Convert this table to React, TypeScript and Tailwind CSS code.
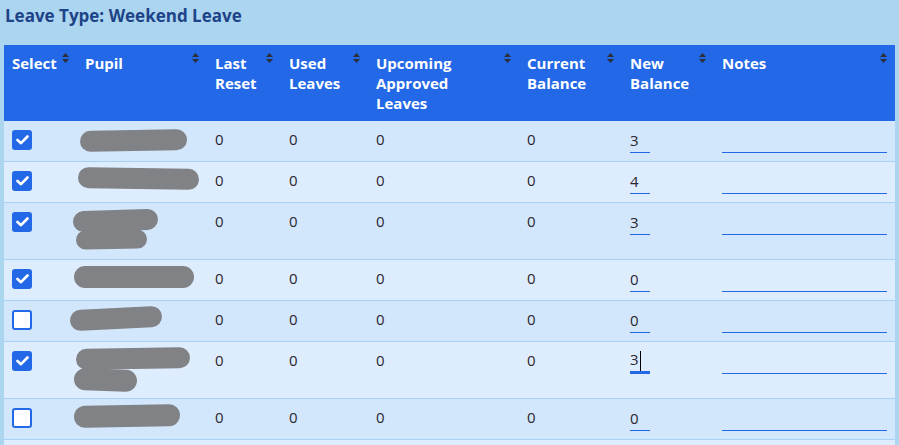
import React from "react";

interface Blob {
  x: number;
  y: number;
  w: number;
  h: number;
  r?: number;
}

interface Row {
  checked: boolean;
  blobs: Blob[];
  tall?: boolean;
  balance: string;
  focused?: boolean;
}

const rows: Row[] = [
  { checked: true, balance: "3", blobs: [{ x: 3, y: 1, w: 107, h: 21, r: -1 }] },
  { checked: true, balance: "4", blobs: [{ x: 1, y: -2, w: 121, h: 21, r: 1 }] },
  {
    checked: true,
    balance: "3",
    tall: true,
    blobs: [
      { x: -4, y: -1, w: 85, h: 21, r: -2 },
      { x: -1, y: 19, w: 71, h: 19, r: -1 },
    ],
  },
  { checked: true, balance: "0", blobs: [{ x: -3, y: -2, w: 120, h: 22, r: 0 }] },
  { checked: false, balance: "0", blobs: [{ x: -7, y: -1, w: 92, h: 21, r: -3 }] },
  {
    checked: true,
    balance: "3",
    tall: true,
    focused: true,
    blobs: [
      { x: -1, y: -2, w: 114, h: 21, r: -1 },
      { x: -3, y: 19, w: 63, h: 22, r: 2 },
    ],
  },
  { checked: false, balance: "0", blobs: [{ x: -3, y: -2, w: 106, h: 22, r: -1 }] },
];

const headers = [
  { label: "Select", w: "w-[73px]", lw: "" },
  { label: "Pupil", w: "w-[130px]", lw: "" },
  { label: "Last Reset", w: "w-[74px]", lw: "" },
  { label: "Used Leaves", w: "w-[87px]", lw: "" },
  { label: "Upcoming Approved Leaves", w: "w-[151px]", lw: "max-w-[90px]" },
  { label: "Current Balance", w: "w-[103px]", lw: "" },
  { label: "New Balance", w: "w-[92px]", lw: "" },
  { label: "Notes", w: "w-[181px]", lw: "" },
];

function SortIcon() {
  return (
    <svg width="7" height="10" viewBox="0 0 7 10" className="absolute right-2 top-2" fill="#2a2f3a">
      <path d="M3.5 0 L7 4 L0 4 Z" />
      <path d="M0 6 L7 6 L3.5 10 Z" />
    </svg>
  );
}

function Checkbox({ checked }: { checked: boolean }) {
  if (!checked) {
    return <div className="mt-px h-5 w-5 rounded-[3px] border-2 border-[#2368e6] bg-white" />;
  }
  return (
    <div className="mt-px flex h-5 w-5 items-center justify-center rounded-[3px] bg-[#2368e6]">
      <svg width="13" height="10" viewBox="0 0 13 10" fill="none">
        <path d="M1.5 5 L5 8.2 L11.5 1.5" stroke="white" strokeWidth="2.6" strokeLinecap="round" strokeLinejoin="round" />
      </svg>
    </div>
  );
}

export default function App() {
  const cell = "border-b border-[#a6d0f6] px-2 py-2 align-top";
  return (
    <div className="h-[445px] w-[899px] overflow-hidden bg-[#acd5f0] font-['Open_Sans',sans-serif]">
      <h2 className="px-[5px] pt-1 pb-[17px] text-[17px] font-bold leading-6 text-[#1d4388]">
        Leave Type: Weekend Leave
      </h2>
      <table className="ml-1 w-[891px] table-fixed border-separate border-spacing-0 text-[15px] leading-5">
        <thead>
          <tr className="bg-[#2368e6] text-white">
            {headers.map((h) => (
              <th key={h.label} className={`relative ${h.w} h-[76px] px-2 py-2 pr-6 text-left align-top font-bold`}>
                <div className={h.lw}>{h.label}</div>
                <SortIcon />
              </th>
            ))}
          </tr>
        </thead>
        <tbody className="text-[#2b2630]">
          {rows.map((row, i) => (
            <tr key={i} className={i % 2 === 0 ? "bg-[#d2e7fc]" : "bg-[#ddedfe]"}>
              <td className={cell}>
                <Checkbox checked={row.checked} />
              </td>
              <td className={cell}>
                <div className={`relative ${row.tall ? "h-10" : "h-5"}`}>
                  {row.blobs.map((b, j) => (
                    <div
                      key={j}
                      className="absolute rounded-full bg-[#818285]"
                      style={{
                        left: b.x - 8,
                        top: b.y,
                        width: b.w,
                        height: b.h,
                        transform: `rotate(${b.r ?? 0}deg)`,
                      }}
                    />
                  ))}
                </div>
              </td>
              <td className={cell}>0</td>
              <td className={cell}>0</td>
              <td className={cell}>0</td>
              <td className={cell}>0</td>
              <td className={cell}>
                <div
                  className={`flex h-6 w-5 items-end pb-[2px] ${
                    row.focused ? "border-b-[3px] border-[#2368e6]" : "border-b border-[#2368e6]"
                  }`}
                >
                  <span className="leading-5">{row.balance}</span>
                  {row.focused && <span className="mb-[-2px] ml-px h-5 w-px bg-black" />}
                </div>
              </td>
              <td className={cell}>
                <div className="h-6 w-full border-b border-[#2368e6]" />
              </td>
            </tr>
          ))}
        </tbody>
      </table>
      <div className="ml-1 h-6 w-[891px] bg-[#ddedfe]" />
    </div>
  );
}
